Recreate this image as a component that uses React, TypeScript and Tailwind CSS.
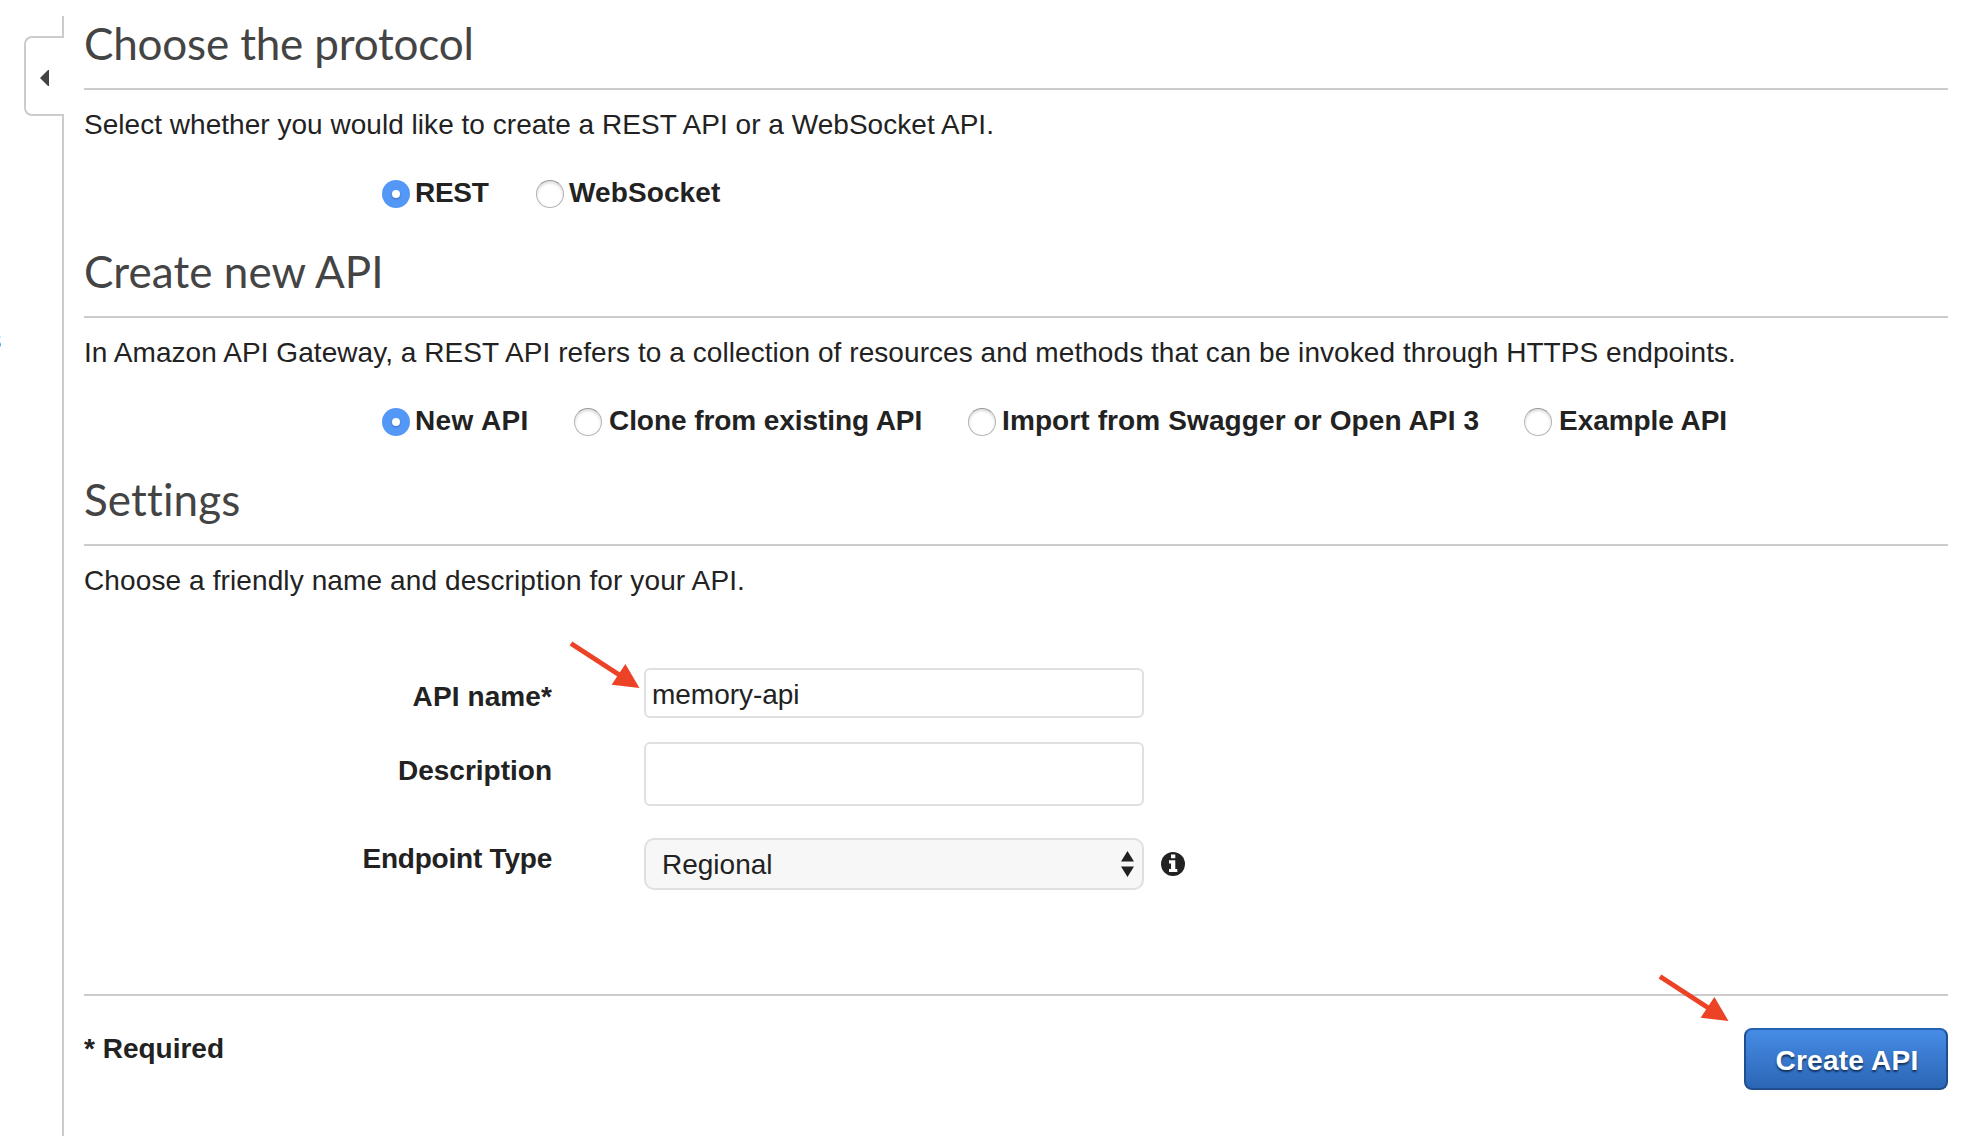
import type { ReactNode } from "react";

type Option = { label: string; checked?: boolean; box: string; text: string };

function Section({ title, tracking, children }: { title: string; tracking: string; children: ReactNode }) {
  return (
    <section className="h-[228px]">
      <h2
        className={`h-[73px] border-b-2 border-[#ccc] font-[Lato,sans-serif] text-[44px] leading-[52px] text-[#444] whitespace-nowrap ${tracking}`}
      >
        {title}
      </h2>
      {children}
    </section>
  );
}

function Intro({ tracking, children }: { tracking: string; children: ReactNode }) {
  return <p className={`mt-[19px] whitespace-nowrap leading-8 ${tracking}`}>{children}</p>;
}

function Radio({ checked }: { checked?: boolean }) {
  if (checked) {
    return (
      <span className="mt-1 flex size-7 shrink-0 items-center justify-center rounded-full bg-[#5498f7]">
        <span className="size-2 rounded-full bg-white shadow-[0_1px_2px_rgba(0,0,0,0.3)]" />
      </span>
    );
  }
  return (
    <span className="mt-1 size-7 shrink-0 rounded-full border border-[#b4b4b4] border-t-[#999] bg-white shadow-[inset_0_2px_3px_rgba(0,0,0,0.14)]" />
  );
}

function RadioRow({ options }: { options: Option[] }) {
  return (
    <div className="mt-[35px] ml-[298px] flex h-8 font-bold leading-8">
      {options.map((o) => (
        <label key={o.label} className={`flex shrink-0 items-start whitespace-nowrap ${o.box}`}>
          <Radio checked={o.checked} />
          <span className={`mt-px ${o.text}`}>{o.label}</span>
        </label>
      ))}
    </div>
  );
}

function Arrow({ className }: { className: string }) {
  return (
    <svg className={`absolute ${className}`} width="72" height="50" viewBox="0 0 72 50">
      <path d="M2 3.5 L52 36" stroke="#ec4226" strokeWidth="5" />
      <path d="M70.5 48 L42.6 44.8 L56.4 24 Z" fill="#ec4226" />
    </svg>
  );
}

export default function App() {
  return (
    <div className="flex h-[1136px] w-[1968px] overflow-hidden bg-white pt-4 font-['Liberation_Sans',Arial,sans-serif] text-[28px] text-[#222]">
      <aside className="flex w-16 shrink-0 flex-col">
        <div className="h-5 border-r-2 border-[#ccc]" />
        <div className="ml-6 h-20 rounded-l-lg border-y-2 border-l-2 border-[#ccc] pt-8 pl-[14px]">
          <svg width="9" height="16" viewBox="0 0 9 16" className="block">
            <path d="M0 8 L8 0 H9 V16 H8 Z" fill="#444" />
          </svg>
        </div>
        <div className="flex-1 border-r-2 border-[#ccc] pt-[208px]">
          <div className="-ml-px flex w-[2.4px] justify-end leading-8 text-[#2a55a5]">s</div>
        </div>
      </aside>

      <main className="ml-5 w-[1864px] shrink-0 pt-px">
        <Section title="Choose the protocol" tracking="tracking-[-0.18px]">
          <Intro tracking="tracking-[0.03px]">
            Select whether you would like to create a REST API or a WebSocket API.
          </Intro>
          <RadioRow
            options={[
              { label: "REST", checked: true, box: "w-[154px]", text: "ml-[5px] tracking-[-0.3px]" },
              { label: "WebSocket", box: "", text: "ml-[5px] tracking-[0.1px]" },
            ]}
          />
        </Section>

        <Section title="Create new API" tracking="tracking-[0.06px]">
          <Intro tracking="tracking-[0.062px]">
            In Amazon API Gateway, a REST API refers to a collection of resources and methods that can be invoked
            through HTTPS endpoints.
          </Intro>
          <RadioRow
            options={[
              { label: "New API", checked: true, box: "w-[192px]", text: "ml-[5px] tracking-[0.4px]" },
              { label: "Clone from existing API", box: "w-[394px]", text: "ml-[7px] tracking-[-0.07px]" },
              { label: "Import from Swagger or Open API 3", box: "w-[556px]", text: "ml-[6px] tracking-[0.11px]" },
              { label: "Example API", box: "", text: "ml-[7px] tracking-[-0.05px]" },
            ]}
          />
        </Section>

        <Section title="Settings" tracking="tracking-[0.13px]">
          <Intro tracking="tracking-[0.11px]">Choose a friendly name and description for your API.</Intro>
        </Section>

        <form className="relative -mt-[33px] grid h-[328px] grid-cols-[468px_500px_24px] content-start items-start border-b-2 border-[#ccc]">
          <label className="mt-[13px] h-[61px] text-right font-bold leading-8 tracking-[0.1px]">API name*</label>
          <input
            className="ml-[92px] h-[50px] w-[500px] rounded-md border-2 border-[#e0e0e0] bg-white px-1.5 pt-1 leading-8 tracking-[-0.03px] outline-none"
            defaultValue="memory-api"
          />
          <span />

          <label className="mt-[13px] h-[83px] text-right font-bold leading-8">Description</label>
          <textarea className="ml-[92px] h-16 w-[500px] resize-none rounded-md border-2 border-[#e0e0e0] bg-white outline-none" />
          <span />

          <label className="mt-[5px] text-right font-bold leading-8 tracking-[-0.22px]">Endpoint Type</label>
          <div className="ml-[92px] flex h-[52px] w-[500px] items-center justify-between rounded-[10px] border-2 border-[#e0e0e0] bg-[#f7f7f7] pr-2 pl-4">
            <span className="mt-0.5 leading-8">Regional</span>
            <svg width="13" height="26" viewBox="0 0 13 26">
              <path d="M6.5 0 L13 10.5 H0 Z M0 15.5 H13 L6.5 26 Z" fill="#222" />
            </svg>
          </div>
          <svg className="mt-3.5 ml-[109px] w-6" width="24" height="24" viewBox="0 0 24 24">
            <circle cx="12" cy="12" r="12" fill="#222" />
            <path d="M10 2.5 h4.3 v3.8 h-4.3 Z M8 8.3 h6.3 v8.6 h2 v3.1 h-8.3 v-3.1 h2 v-5.5 h-2 Z" fill="#fff" />
          </svg>
          <Arrow className="top-[-28px] left-[485px]" />
          <Arrow className="top-[305px] left-[1574px]" />
        </form>

        <footer className="flex items-start justify-between pt-8">
          <span className="mt-[5px] font-bold leading-8">* Required</span>
          <button
            type="button"
            className="h-[62px] w-[204px] rounded-lg border-2 border-[#1f4f8f] border-t-[#2562b0] bg-linear-to-b from-[#468ce6] to-[#2c66b5] pt-[3px] pl-0.5 font-bold tracking-[0.24px] text-white [text-shadow:0_2px_2px_#14305a]"
          >
            Create API
          </button>
        </footer>
      </main>
    </div>
  );
}
